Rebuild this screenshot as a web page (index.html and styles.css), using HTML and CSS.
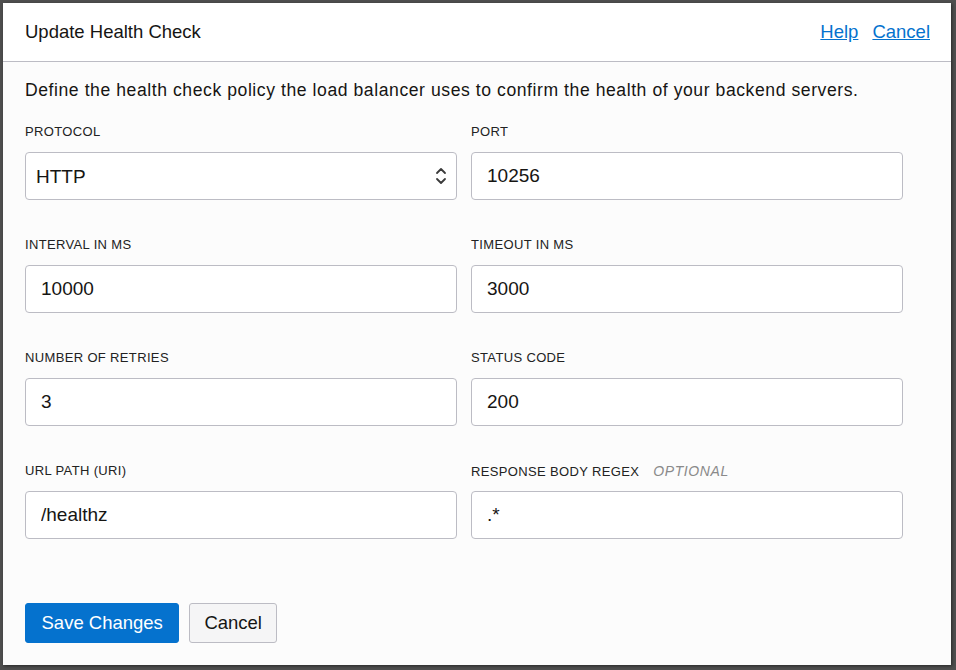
FILE: index.html
```html
<!DOCTYPE html>
<html lang="en">
<head>
<meta charset="utf-8">
<title>Update Health Check</title>
<link rel="stylesheet" href="styles.css">
</head>
<body>
<div class="backdrop">
  <div class="dialog">
    <div class="dialog-header">
      <h1 class="dialog-title">Update Health Check</h1>
      <div class="header-links">
        <a href="#" class="link">Help</a>
        <a href="#" class="link">Cancel</a>
      </div>
    </div>
    <div class="dialog-body">
      <p class="intro">Define the health check policy the load balancer uses to confirm the health of your backend servers.</p>
      <div class="form-grid">
        <div class="field">
          <label class="field-label">PROTOCOL</label>
          <div class="select-wrap">
            <select class="control select"><option>HTTP</option><option>TCP</option></select>
            <svg class="chevrons" width="12" height="20" viewBox="0 0 12 20"><path d="M2 7 L6 3 L10 7" fill="none" stroke="#3a3a3a" stroke-width="1.8" stroke-linecap="round" stroke-linejoin="round"/><path d="M2 13 L6 17 L10 13" fill="none" stroke="#3a3a3a" stroke-width="1.8" stroke-linecap="round" stroke-linejoin="round"/></svg>
          </div>
        </div>
        <div class="field">
          <label class="field-label">PORT</label>
          <input class="control" type="text" value="10256">
        </div>
        <div class="field">
          <label class="field-label">INTERVAL IN MS</label>
          <input class="control" type="text" value="10000">
        </div>
        <div class="field">
          <label class="field-label">TIMEOUT IN MS</label>
          <input class="control" type="text" value="3000">
        </div>
        <div class="field">
          <label class="field-label">NUMBER OF RETRIES</label>
          <input class="control" type="text" value="3">
        </div>
        <div class="field">
          <label class="field-label">STATUS CODE</label>
          <input class="control" type="text" value="200">
        </div>
        <div class="field">
          <label class="field-label">URL PATH (URI)</label>
          <input class="control" type="text" value="/healthz">
        </div>
        <div class="field">
          <label class="field-label">RESPONSE BODY REGEX <span class="optional">OPTIONAL</span></label>
          <input class="control" type="text" value=".*">
        </div>
      </div>
      <div class="actions">
        <button class="btn btn-primary">Save Changes</button>
        <button class="btn btn-secondary">Cancel</button>
      </div>
    </div>
  </div>
</div>
</body>
</html>
```
FILE: styles.css
```css
html, body {
  margin: 0;
  padding: 0;
}
body {
  width: 956px;
  height: 670px;
  overflow: hidden;
  background: #4f4f4f;
  font-family: "Liberation Sans", Arial, sans-serif;
  color: #161513;
}
.backdrop {
  padding: 3px 5px 5px 3px;
}
.dialog {
  width: 948px;
  height: 662px;
  background: #fcfcfc;
  box-shadow: 1px 1px 3px rgba(0,0,0,0.5);
  display: flex;
  flex-direction: column;
}
.dialog-header {
  height: 58px;
  border-bottom: 1px solid #bcbcc4;
  background: #ffffff;
  display: flex;
  align-items: center;
  justify-content: space-between;
  padding: 0 21px 0 22px;
}
.dialog-title {
  margin: 0;
  font-size: 18.5px;
  font-weight: normal;
  color: #161513;
}
.header-links {
  display: flex;
  gap: 14px;
}
.link {
  color: #0572ce;
  font-size: 18.5px;
  text-decoration: underline;
}
.dialog-body {
  padding: 16px 48px 22px 22px;
  display: flex;
  flex-direction: column;
  flex: 1;
}
.intro {
  margin: 0 0 22px 0;
  font-size: 17.6px;
  letter-spacing: 0.56px;
  line-height: 24px;
  color: #161513;
}
.form-grid {
  display: grid;
  grid-template-columns: 432px 432px;
  column-gap: 14px;
  row-gap: 37px;
}
.field {
  display: flex;
  flex-direction: column;
  gap: 12px;
}
.field-label {
  display: block;
  height: 16px;
  font-size: 13px;
  letter-spacing: 0.35px;
  line-height: 16px;
  color: #222222;
}
.optional {
  margin-left: 10px;
  font-size: 14px;
  line-height: 16px;
  letter-spacing: 0.6px;
  font-style: italic;
  color: #8a8a8a;
}
.control {
  box-sizing: border-box;
  width: 432px;
  height: 48px;
  border: 1px solid #bcbcc4;
  border-radius: 4px;
  background: #ffffff;
  font-family: "Liberation Sans", Arial, sans-serif;
  font-size: 19px;
  color: #161513;
  padding: 0 15px;
  margin: 0;
  outline: none;
}
.select-wrap {
  position: relative;
  width: 432px;
  height: 48px;
}
.select {
  -webkit-appearance: none;
  appearance: none;
  padding: 0 30px 0 10px;
}
.chevrons {
  position: absolute;
  right: 10px;
  top: 14px;
  pointer-events: none;
}
.actions {
  margin-top: auto;
  display: flex;
  gap: 10px;
}
.btn {
  height: 40px;
  border-radius: 3px;
  font-family: "Liberation Sans", Arial, sans-serif;
  font-size: 18.5px;
  padding: 0 14px;
  cursor: pointer;
}
.btn-primary {
  background: #0572ce;
  border: 1px solid #0572ce;
  color: #ffffff;
  padding: 0 15.5px;
}
.btn-secondary {
  background: #f5f5f6;
  border: 1px solid #bcbcc4;
  color: #161513;
}
```
